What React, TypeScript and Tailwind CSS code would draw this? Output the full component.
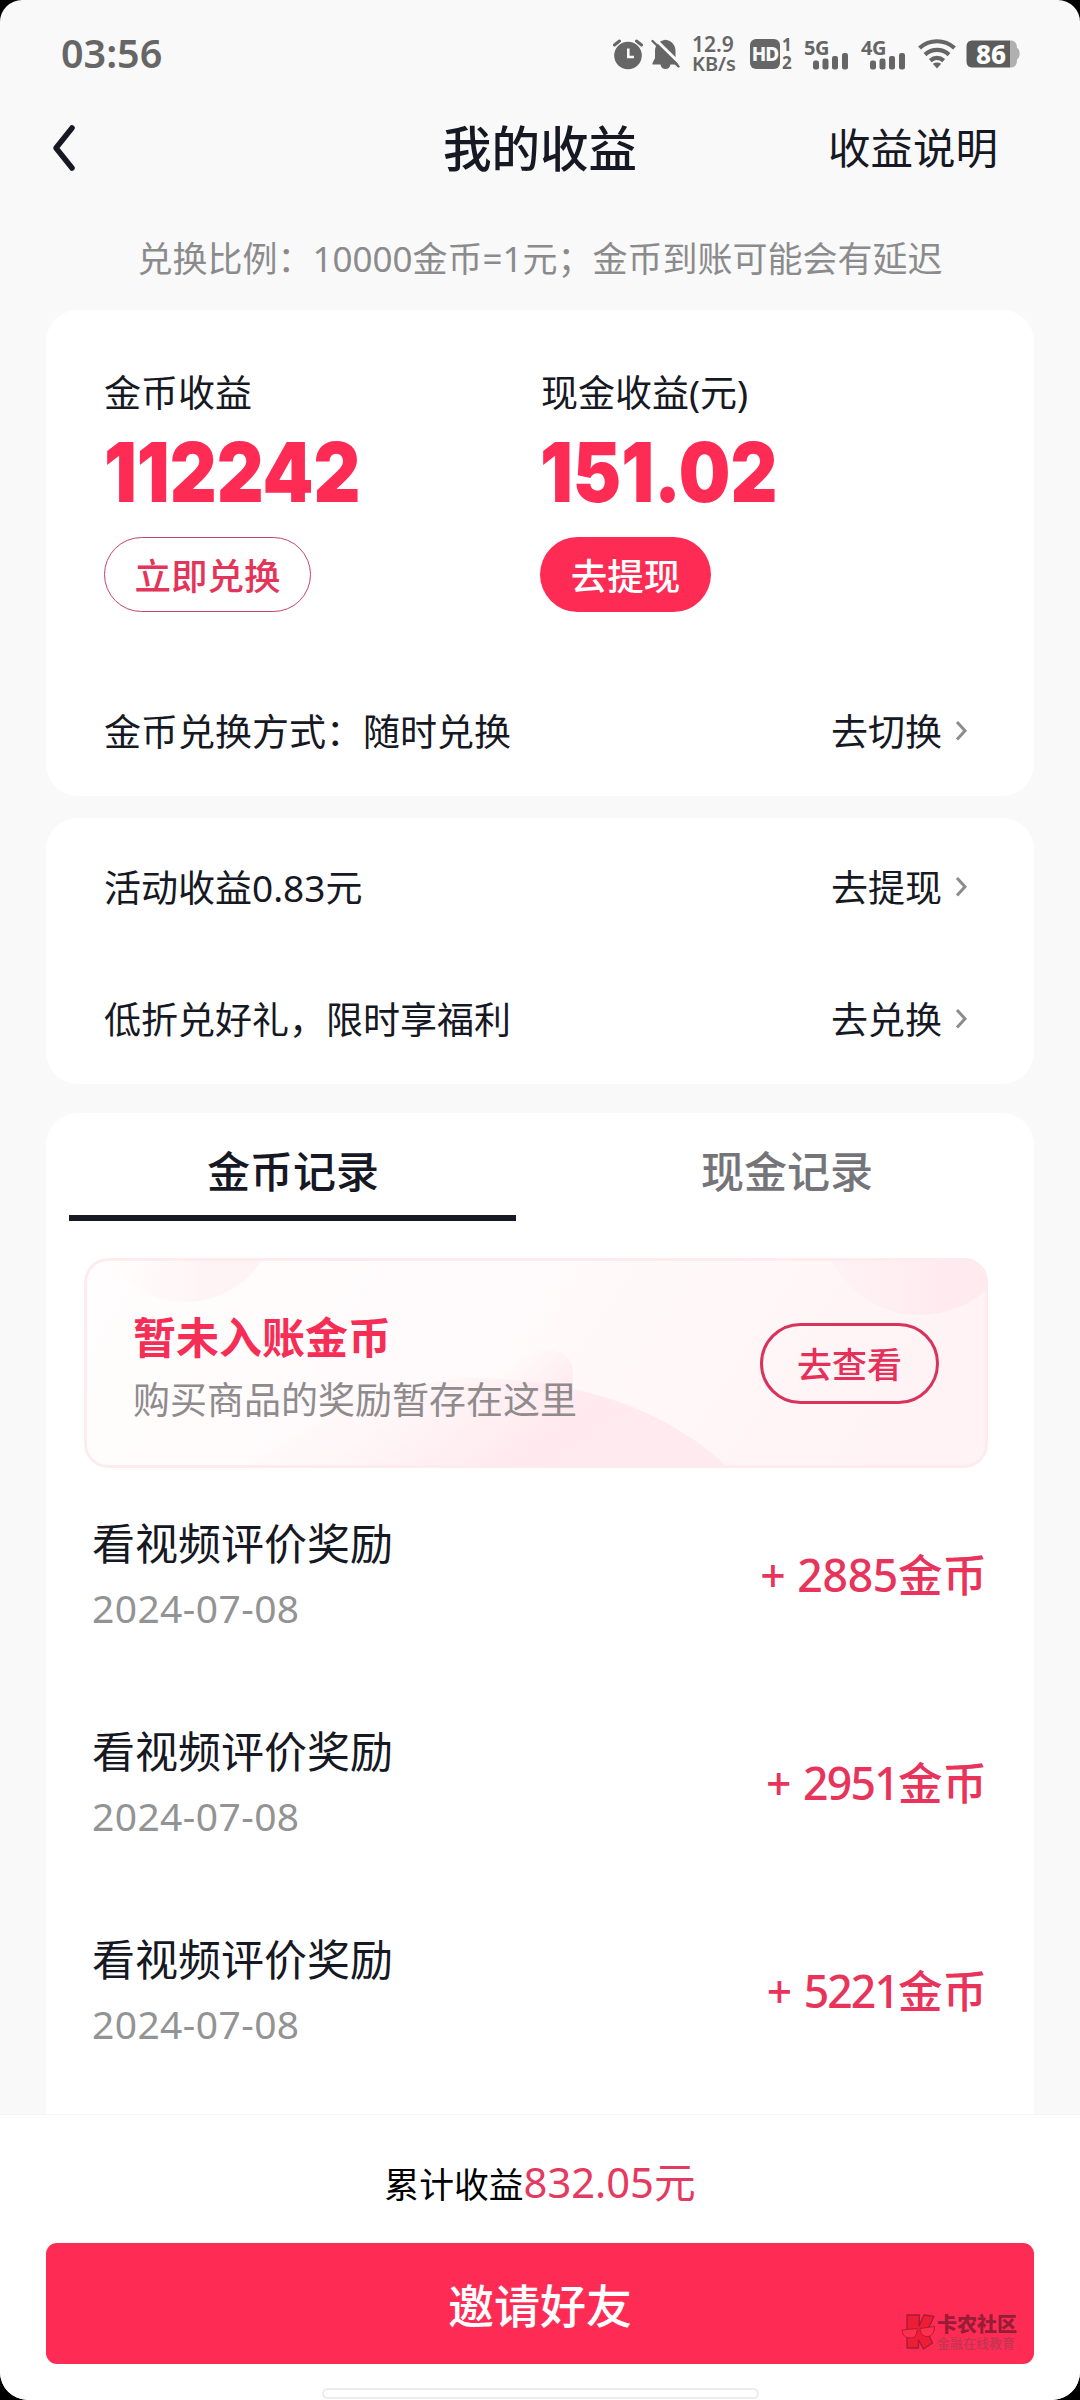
import React from "react";

const records = [
  { id: 1, title: "看视频评价奖励", date: "2024-07-08", amount: 2885, tracking: "tracking-[-0.3px]" },
  { id: 2, title: "看视频评价奖励", date: "2024-07-08", amount: 2951, tracking: "tracking-[-1.7px]" },
  { id: 3, title: "看视频评价奖励", date: "2024-07-08", amount: 5221, tracking: "tracking-[-1.9px]" },
];

function AlarmIcon() {
  return (
    <svg width="31" height="31" viewBox="0 0 31 31">
      <circle cx="15" cy="16.5" r="13.8" fill="#666" />
      <path d="M1.5 6 L6.5 2 M28.5 6 L23.5 2" stroke="#666" strokeWidth="3" strokeLinecap="round" />
      <path d="M15.3 9.5 V18 H21" fill="none" stroke="#fafafa" strokeWidth="2.6" />
    </svg>
  );
}

function BellOffIcon() {
  return (
    <svg width="29" height="31" viewBox="0 0 29 31">
      <path
        d="M14.5 0.8 C20.5 1.6 24.5 6 24.5 12 V19 L27.5 24.5 V25.5 H19.5 C19 28.5 17 30 14.5 30 C12 30 10 28.5 9.5 25.5 H1.5 V24 L4 19 V12 C4 6 8.5 1.6 14.5 0.8 Z"
        fill="#666"
      />
      <path d="M3.5 -0.5 L30 25.5" stroke="#fafafa" strokeWidth="3" />
      <path d="M1.5 2 L27.5 27.5" stroke="#666" strokeWidth="2.4" strokeLinecap="round" />
    </svg>
  );
}

function WifiIcon() {
  return (
    <svg width="38" height="30" viewBox="0 0 38 30" fill="none" stroke="#666" strokeWidth="4.2">
      <path d="M1.5 9 C11.5 0 26.5 0 36.5 9" />
      <path d="M7 15.6 C14 9.3 24 9.3 31 15.6" />
      <path d="M12.3 21.6 C16.5 18 21.5 18 25.7 21.6" />
      <path d="M19 29.5 L14.8 24.8 C17.5 23 20.5 23 23.2 24.8 Z" fill="#666" stroke="none" />
    </svg>
  );
}

function BatteryIcon() {
  return (
    <div className="relative w-[54px] h-[28px]">
      <svg width="54" height="28" viewBox="0 0 54 28">
        <path d="M44 0.5 C49 0.5 51 3 51 8 C54.6 9.5 54.6 17.5 51 19.5 C51 25 49 27.5 44 27.5 Z" fill="#b0b0b0" />
        <path d="M7 0.5 H44 V27.5 H7 C2.5 27.5 0.5 25.5 0.5 21 V7 C0.5 2.5 2.5 0.5 7 0.5 Z" fill="#5c5c5c" />
      </svg>
      <span className="absolute inset-0 pl-[10px] text-[26px] leading-[28px] font-extrabold text-white">86</span>
    </div>
  );
}

function Signal({ label }: { label: string }) {
  return (
    <div className="w-[44px] h-[31px]">
      <div className="h-[13px] text-[20px] leading-[17px] font-bold tracking-[-0.5px]">{label}</div>
      <svg className="ml-[9px]" width="35" height="18" viewBox="0 0 35 18" fill="#666">
        <rect x="0" y="8.5" width="6" height="9" rx="2.2" />
        <rect x="9.5" y="6.5" width="6" height="11" rx="2.2" />
        <rect x="19" y="4" width="6" height="13.5" rx="2.2" />
        <rect x="29" y="1" width="6" height="16.5" rx="2.2" />
      </svg>
    </div>
  );
}

function StatusBar() {
  return (
    <div className="h-[108px] pl-[61px] pr-[60px] flex items-center justify-between text-[#666]">
      <span className="text-[39.5px] leading-none font-semibold">03:56</span>
      <div className="flex items-center">
        <AlarmIcon />
        <span className="ml-[7px]"><BellOffIcon /></span>
        <div className="ml-[12px] w-[45px] text-[21px] leading-[20px] font-semibold whitespace-nowrap">
          <div>12.9</div>
          <div className="text-[20px]">KB/s</div>
        </div>
        <div className="ml-[13px] flex items-center w-[43px]">
          <div className="w-[30px] h-[30px] rounded-[6px] bg-[#666] text-center text-[19px] leading-[30px] font-extrabold tracking-[-1px] text-[#fafafa]">HD</div>
          <div className="ml-[2px] text-[17px] leading-[18px] font-bold">
            <div>1</div>
            <div>2</div>
          </div>
        </div>
        <div className="ml-[11px]"><Signal label="5G" /></div>
        <div className="ml-[13px]"><Signal label="4G" /></div>
        <div className="ml-[13px]"><WifiIcon /></div>
        <div className="ml-[10px]"><BatteryIcon /></div>
      </div>
    </div>
  );
}

function LinkRow({ label, action, className }: { label: string; action: string; className: string }) {
  return (
    <div className={"flex items-center justify-between text-[37px] leading-none " + className}>
      <span>{label}</span>
      <span className="flex items-center">
        {action}
        <svg className="ml-[12px]" width="14" height="20" viewBox="0 0 14 20" fill="none" stroke="#8c8c8f" strokeWidth="3">
          <path d="M3 1 L11 9.7 L3 18.5" />
        </svg>
      </span>
    </div>
  );
}

function PendingBanner() {
  return (
    <div className="relative mt-[37px] ml-[38px] w-[904px] h-[210px] rounded-[24px] overflow-hidden">
      <svg className="absolute inset-0" width="904" height="210" viewBox="0 0 904 210">
        <defs>
          <linearGradient id="bannerBg" x1="0" y1="0" x2="1" y2="0.15">
            <stop offset="0" stopColor="#fffdfd" />
            <stop offset="0.5" stopColor="#fffafb" />
            <stop offset="1" stopColor="#fff3f5" />
          </linearGradient>
          <linearGradient id="bannerHill" x1="0" y1="0" x2="1" y2="0.25">
            <stop offset="0" stopColor="#ffe7ed" stopOpacity="0" />
            <stop offset="0.35" stopColor="#ffe7ed" stopOpacity="0.15" />
            <stop offset="0.75" stopColor="#ffe8ed" stopOpacity="0.9" />
            <stop offset="1" stopColor="#ffebef" />
          </linearGradient>
          <linearGradient id="bannerPuff" x1="0" y1="0" x2="1" y2="0.5">
            <stop offset="0.4" stopColor="#ffeef1" stopOpacity="0" />
            <stop offset="1" stopColor="#ffedf1" />
          </linearGradient>
          <linearGradient id="bannerLeft" x1="0" y1="0" x2="1" y2="0">
            <stop offset="0.1" stopColor="#fff5f6" stopOpacity="0" />
            <stop offset="0.6" stopColor="#fff4f5" />
          </linearGradient>
          <linearGradient id="bannerCorner" x1="0" y1="0" x2="1" y2="0">
            <stop offset="0" stopColor="#fff0f3" stopOpacity="0.4" />
            <stop offset="0.5" stopColor="#ffecf0" />
            <stop offset="1" stopColor="#ffe8ed" />
          </linearGradient>
        </defs>
        <rect width="904" height="210" fill="url(#bannerBg)" />
        <circle cx="102" cy="-46" r="90" fill="url(#bannerLeft)" />
        <circle cx="836" cy="-43" r="100" fill="url(#bannerCorner)" />
        <path d="M400 125 C430 90 489 78 489 115 V134 L400 135 Z" fill="url(#bannerPuff)" />
        <path d="M160 210 C250 150 330 118 400 120 C500 124 580 150 645 210 Z" fill="url(#bannerHill)" />
        <rect x="1.5" y="1.5" width="901" height="207" rx="22.5" fill="none" stroke="#feebef" strokeWidth="3" />
      </svg>
      <div className="relative h-full pl-[49px] pr-[49px] flex items-center justify-between">
        <div className="pt-[9px]">
          <div className="text-[43px] leading-[65px] font-bold text-[#f62d55]">暂未入账金币</div>
          <div className="text-[37px] leading-[60px] text-[#8f8b8d]">购买商品的奖励暂存在这里</div>
        </div>
        <button className="w-[179px] h-[81px] pt-[2px] rounded-full border-[3px] border-[#d8335b] text-[35px] leading-none font-medium text-[#e62f59]">去查看</button>
      </div>
    </div>
  );
}

function Watermark() {
  return (
    <div className="absolute right-[17px] bottom-[14px] flex items-center">
      <svg width="35" height="36" viewBox="0 0 35 36" fill="#ee1c35" stroke="#a31d36" strokeWidth="1.3" strokeLinejoin="round">
        <path d="M6 1 H18.5 L18 12 L23 1 L33 2.5 L26 17 L31.5 29 L22.5 35 L17.5 26 V34 H6 Z" />
        <path d="M1 16 L16 14.5 C16.5 21 13.5 24 9 24 C4 24 1.5 21 1 16 Z M19 14.5 L33.5 12.5 C33.5 19 30.5 22.5 26.5 22.5 C22 22.5 19.5 20 19 14.5 Z" fill="#ff2f50" strokeWidth="0.9" />
      </svg>
      <div className="ml-[1px]">
        <div className="text-[20px] leading-[22px] font-black text-[#981c35]">卡农社区</div>
        <div className="text-[13px] leading-[14px] font-medium text-[#c23451]">金融在线教育</div>
      </div>
    </div>
  );
}

export default function App() {
  return (
    <div className="w-[1080px] h-[2400px] bg-black overflow-hidden font-['Noto_Sans','Noto_Sans_CJK_SC',sans-serif] text-[#161823]">
      <div className="relative h-full flex flex-col bg-[#f9f9f9] rounded-t-[22px] rounded-b-[28px] overflow-hidden">
        <StatusBar />

        <header className="h-[80px] grid grid-cols-3 items-center pl-[51px] pr-[82px]">
          <svg width="28" height="50" viewBox="0 0 28 50" fill="none" stroke="#161823" strokeWidth="5.5" strokeLinecap="round" strokeLinejoin="round">
            <path d="M21 5 L5 25 L21 45" />
          </svg>
          <h1 className="ml-[31px] text-center text-[48.5px] leading-none font-medium whitespace-nowrap">我的收益</h1>
          <span className="text-right text-[42.5px] leading-none whitespace-nowrap">收益说明</span>
        </header>

        <p className="h-[122px] pt-[46px] text-center text-[35px] leading-[50px] text-[#8b8b8d]">
          兑换比例：10000金币=1元；金币到账可能会有延迟
        </p>

        <section className="mx-[46px] h-[486px] rounded-[32px] bg-white pl-[58px] pr-[66px] pt-[60px]">
          <div className="flex">
            <div className="w-[436px]">
              <div className="text-[37px] leading-[46px]">金币收益</div>
              <div className="h-[112px] origin-left scale-x-[0.875] font-[Inter] text-[83px] leading-[112px] font-black text-[#fe2c55]">112242</div>
              <button className="mt-[9px] w-[207px] h-[75px] pt-[4px] rounded-full border border-[#c34468] text-[36.5px] leading-none font-medium text-[#e33459]">立即兑换</button>
            </div>
            <div>
              <div className="ml-px text-[37px] leading-[46px]">现金收益(元)</div>
              <div className="h-[112px] origin-left scale-x-[0.875] font-[Inter] text-[83px] leading-[112px] font-black text-[#fe2c55]">151.02</div>
              <button className="mt-[9px] w-[171px] h-[75px] pt-[4px] rounded-full bg-[#fe2c55] text-[36.5px] leading-none font-medium text-white">去提现</button>
            </div>
          </div>
          <LinkRow label="金币兑换方式：随时兑换" action="去切换" className="mt-[59px] h-[120px]" />
        </section>

        <section className="mx-[46px] mt-[22px] h-[266px] rounded-[32px] bg-white pl-[58px] pr-[66px] pt-[3px]">
          <LinkRow label="活动收益0.83元" action="去提现" className="h-[132px]" />
          <LinkRow label="低折兑好礼，限时享福利" action="去兑换" className="h-[132px]" />
        </section>

        <section className="mx-[46px] mt-[29px] flex-1 rounded-t-[32px] bg-white">
          <div className="grid grid-cols-2 text-center text-[43px] leading-[86px] font-medium">
            <div className="pt-[16px]">
              金币记录
              <div className="ml-[23px] mr-[24px] h-[6px] bg-[#161823]" />
            </div>
            <div className="pt-[16px] text-[#757579]">现金记录</div>
          </div>
          <PendingBanner />
          <div className="mt-[4px]">
            {records.map((r) => (
              <div key={r.id} className="h-[208px] pl-[46px] pr-[47px] flex items-center justify-between">
                <div>
                  <div className="text-[43px] leading-[64px]">{r.title}</div>
                  <div className="text-[39px] leading-[64px] tracking-[0.4px] text-[#939395]">{r.date}</div>
                </div>
                <span className="pb-[2px] text-[44.5px] leading-none font-medium text-[#e8345b]">
                  + <span className={r.tracking}>{r.amount}</span>金币
                </span>
              </div>
            ))}
          </div>
        </section>

        <footer className="h-[286px] bg-white border-t border-[#f4f4f4] px-[46px] flex flex-col items-center">
          <div className="h-[128px] pt-[37px] leading-[60px] text-[34.8px] text-black">
            累计收益<span className="text-[41.7px] text-[#e53a60]">832.05元</span>
          </div>
          <div className="relative w-full">
            <button className="w-full h-[121px] pt-[2px] rounded-[11px] bg-[#fe2c55] text-[46px] leading-none font-medium text-white">邀请好友</button>
            <Watermark />
          </div>
          <div className="mt-[24px] w-[437px] h-[11px] rounded-full border-2 border-[#ececec] bg-white" />
        </footer>
      </div>
    </div>
  );
}
